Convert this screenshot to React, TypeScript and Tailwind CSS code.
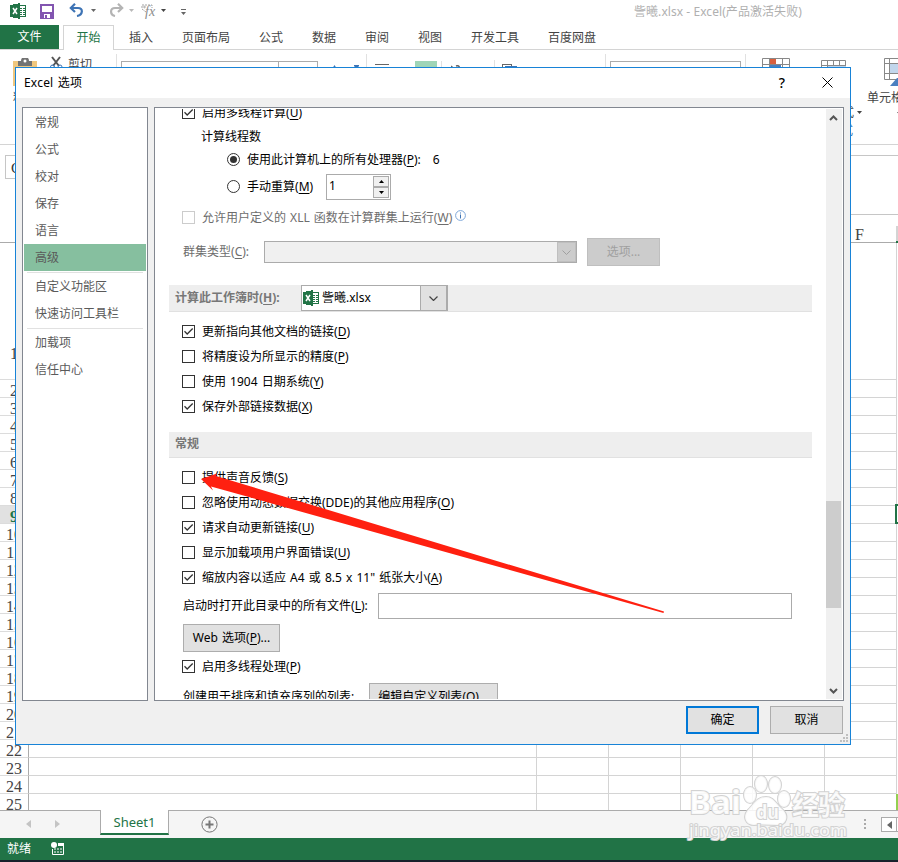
import type { ReactNode } from 'react';

const NAV_MAIN = ['常规', '公式', '校对', '保存', '语言', '高级'];
const NAV_CUSTOM = ['自定义功能区', '快速访问工具栏'];
const NAV_EXTRA = ['加载项', '信任中心'];

const ROWS = Array.from({ length: 25 }, (_, i) => i + 1);

const ExcelIcon = ({ className = '' }: { className?: string }) => (
    <svg width="16" height="16" viewBox="0 0 16 16" className={`shrink-0 ${className}`} shapeRendering="crispEdges">
        <rect x="8.5" y="2.5" width="7" height="11" fill="#fff" stroke="#217346" />
        <path d="M10 5h2M13 5h2M10 7h2M13 7h2M10 9h2M13 9h2M10 11h2M13 11h2" stroke="#217346" />
        <path d="M0 2 10 0v16L0 14z" fill="#217346" />
        <path d="m3 5 4 6M7 5l-4 6" stroke="#fff" strokeWidth="1.5" shapeRendering="auto" />
    </svg>
);

const Caret = ({ className = '' }: { className?: string }) => (
    <svg width="5" height="3" viewBox="0 0 5 3" className={`shrink-0 ${className}`}>
        <path d="M0 0h5L2.5 3z" fill="currentColor" />
    </svg>
);

const Key = ({ children }: { children: string }) => (
    <>(<span className="underline decoration-1 underline-offset-2">{children}</span>)</>
);

const Box = ({ checked, disabled }: { checked?: boolean; disabled?: boolean }) => (
    <span className={`flex h-[13px] w-[13px] shrink-0 border bg-white ${disabled ? 'border-[#cccccc]' : 'border-[#333333]'}`}>
        {checked && (
            <svg width="11" height="11" viewBox="0 0 11 11">
                <path d="M1.5 5.3 4.2 8 9.7 2.5" fill="none" stroke="#333" strokeWidth="1.3" />
            </svg>
        )}
    </span>
);

const Check = ({ checked, disabled, children }: { checked?: boolean; disabled?: boolean; children: ReactNode }) => (
    <label className={`ml-[27px] flex h-[25px] items-center gap-[7px] ${disabled ? 'text-[#6d6d6d]' : 'text-black'}`}>
        <Box checked={checked} disabled={disabled} />
        <span>{children}</span>
    </label>
);

const Radio = ({ checked }: { checked?: boolean }) => (
    <span className="mb-px flex h-[13px] w-[13px] shrink-0 items-center justify-center rounded-full border border-[#333333] bg-white">
        {checked && <span className="h-[7px] w-[7px] rounded-full bg-[#333333]" />}
    </span>
);

const NavItem = ({ label }: { label: string }) => (
    <li className={`flex h-[27px] items-center pl-[11px] text-[#5a5a5a] ${label === '高级' ? 'bg-[#86bf9f]' : ''}`}>{label}</li>
);

const NavRule = () => <li className="mx-[3px] mt-px h-px bg-[#e1e1e1]" />;

const QuickAccess = () => (
    <div className="flex h-[25px] items-start [&>*]:shrink-0">
        <ExcelIcon className="ml-[10px] mt-[3px]" />
        <svg width="14" height="15" viewBox="0 0 14 15" className="ml-[14px] mt-[4px]" fill="none">
            <path d="M1 1h12v13H1z" stroke="#8255b0" strokeWidth="2" />
            <path d="M1 8h12v6H1z" fill="#8255b0" />
            <path d="M4 10h6v4H4z" fill="#fff" />
            <path d="M5 11h2v3H5z" fill="#8255b0" />
        </svg>
        <svg width="15" height="14" viewBox="0 0 15 14" className="ml-[15px] mt-[3px]" fill="none" stroke="#3e74b5" strokeWidth="2.2">
            <path d="M2 5h7c5.500 0 5 7-1 8" />
            <path d="M6 .8 1.800 5 6 9" />
        </svg>
        <Caret className="ml-[7px] mt-[9px] text-[#666]" />
        <svg width="15" height="14" viewBox="0 0 15 14" className="ml-[13px] mt-[3px]" fill="none" stroke="#b4b4b4" strokeWidth="2.2">
            <path d="M13 5H6C.5 5 1 12 6 13" />
            <path d="M9 .8 13.200 5 9 9" />
        </svg>
        <Caret className="ml-[5px] mt-[9px] text-[#b9b9b9]" />
        <svg width="17" height="17" viewBox="0 0 17 17" className="ml-[7px] mt-[3px]" fill="none" stroke="#a3a3a3">
            <path d="M5 9 1 6V2h10v3" strokeDasharray="2 1" />
            <circle cx="3.500" cy="4" r=".8" />
            <text x="4" y="13" fontSize="14" fontStyle="italic" fill="#8c8c8c" stroke="none" fontFamily="Liberation Serif, serif">fx</text>
        </svg>
        <Caret className="ml-[3px] mt-[9px] text-[#444]" />
        <svg width="7" height="7" viewBox="0 0 7 7" className="ml-[14px] mt-[9px]" fill="#666">
            <path d="M1 0h5v1H1zM1 3h5L3.500 6z" />
        </svg>
        <span className="ml-[447px] mt-[3px] whitespace-nowrap text-[12px] leading-[18px] tracking-[0.06px] text-[#b0b0b0]">訾曦.xlsx - Excel(产品激活失败)</span>
    </div>
);

const Tabs = () => (
    <nav className="flex h-[25px] border-b border-[#d4d4d4] text-[12px] leading-[25px] text-[#444]">
        <span className="w-[59px] bg-[#217346] text-center leading-[24px] text-white">文件</span>
        <span className="ml-[4px] h-[25px] w-[51px] border-x border-t border-[#d4d4d4] bg-white text-center leading-[23px] text-[#217346]">开始</span>
        <span className="ml-[15px]">插入</span>
        <span className="ml-[29px]">页面布局</span>
        <span className="ml-[29px]">公式</span>
        <span className="ml-[29px]">数据</span>
        <span className="ml-[29px]">审阅</span>
        <span className="ml-[29px]">视图</span>
        <span className="ml-[29px]">开发工具</span>
        <span className="ml-[29px]">百度网盘</span>
    </nav>
);

const Ribbon = () => (
    <div className="flex h-[95px] items-start overflow-hidden border-b border-[#d4d4d4] text-[12px] text-[#444] [&>*]:shrink-0">
        <div className="ml-[13px] mt-[8px] w-[24px]">
            <svg width="24" height="28" viewBox="0 0 24 28">
                <path d="M0 3h24v25H0z" fill="#efc77f" />
                <path d="M5 3h3a4 4 0 0 1 8 0h3v5H5z" fill="#737373" />
                <circle cx="12" cy="3" r="1.500" fill="#fff" />
            </svg>
            <span className="mt-[3px] block whitespace-nowrap leading-[18px]">粘贴</span>
        </div>
        <svg width="13" height="14" viewBox="0 0 13 14" className="ml-[13px] mt-[6px]" fill="none">
            <path d="m2 1 7 9M10 1 3 10" stroke="#555" strokeWidth="2" />
            <circle cx="2.500" cy="11" r="2" stroke="#3e74b5" />
            <circle cx="10" cy="11" r="2" stroke="#3e74b5" />
        </svg>
        <span className="ml-[5px] mt-[6px] leading-[18px]">剪切</span>
        <span className="ml-[24px] mt-[4px] h-[80px] w-px bg-[#e1e1e1]" />
        <span className="ml-[4px] mt-[11px] h-[22px] w-[158px] border border-[#ababab]" />
        <span className="-ml-px mt-[11px] h-[22px] w-[40px] border border-[#ababab]" />
        <svg width="5" height="4" viewBox="0 0 5 4" className="ml-[14px] mt-[15px]"><path d="M0 4h5L2.500 0z" fill="#3e74b5" /></svg>
        <svg width="5" height="4" viewBox="0 0 5 4" className="ml-[17px] mt-[15px]"><path d="M0 0h5v1L2.500 4 0 1z" fill="#3e74b5" /></svg>
        <span className="ml-[7px] mt-[4px] h-[80px] w-px bg-[#e1e1e1]" />
        <span className="ml-[8px] mt-[14px] h-px w-[14px] bg-[#666]" />
        <span className="ml-[26px] mt-[11px] h-[20px] w-[22px] bg-[#9fd5b7]" />
        <span className="ml-[4px] mt-[11px] h-[70px] w-px bg-[#e1e1e1]" />
        <svg width="10" height="8" viewBox="0 0 10 8" className="ml-[9px] mt-[15px]" fill="none" stroke="#666"><path d="m0 1 4 4M5 1c3-1 4 1 4 5" strokeWidth="1.500" /></svg>
        <span className="ml-[33px] mt-[10px] h-[70px] w-px bg-[#e1e1e1]" />
        <span className="ml-[7px] mt-[14px] h-[12px] w-[10px] border border-[#666]" />
        <span className="-ml-[7px] mt-[16px] h-[12px] w-[12px] bg-[#3e74b5]" />
        <span className="ml-[88px] mt-[4px] h-[80px] w-px bg-[#e1e1e1]" />
        <span className="ml-[4px] mt-[11px] h-[40px] w-[131px] border border-[#ababab]" />
        <span className="ml-[4px] mt-[4px] h-[80px] w-px bg-[#e1e1e1]" />
        <svg width="28" height="22" viewBox="0 0 28 22" className="ml-[16px] mt-[8px]" fill="none">
            <path d="M.5.500h27v21H.5zM.5 6.500h27M7.500.500v21M13.500.500v21M20.500.500v21" stroke="#888" />
            <path d="M8 1h6v5H8z" fill="#d9603f" />
            <path d="M8 7h11v5H8z" fill="#4a7fc0" />
        </svg>
        <div className="ml-[31px] mt-[10px] flex w-[46px] flex-col">
            <svg width="26" height="20" viewBox="0 0 26 20" fill="none" stroke="#888">
                <path d="M.5.500h24v19H.5zM.5 5.500h24M6.500.500v19M12.500.500v19M18.500.500v19" />
                <path d="M7 6h18v10H7z" fill="#bdd3ea" stroke="none" />
            </svg>
            <span className="mt-[24px] flex items-center gap-[3px] leading-[18px]"><span className="ml-[9px] w-[24px]">格式</span><Caret className="-mt-[2px]" /></span>
            <span className="ml-[20px] leading-[18px] text-[#3e74b5]">式</span>
        </div>
        <div className="mt-[8px] w-[31px] overflow-hidden">
            <svg width="32" height="29" viewBox="0 0 32 29" className="ml-[17px]" fill="none">
                <path d="M.5.500h30v21H.5zM.5 5.500h30M5.500.500v21M.5 15.500h30M15.500.500v21" stroke="#888" />
                <path d="M6 6h9v9H6z" fill="#c2d6ec" />
                <path d="m6 28 7-8h12v8z" fill="#4a7fc0" />
            </svg>
            <span className="mt-px block whitespace-nowrap leading-[20px]">单元格</span>
            <Caret className="ml-[30px] mt-[4px]" />
        </div>
    </div>
);

const Sheet = () => (
    <div className="flex h-[584px] flex-col overflow-hidden font-['Liberation_Serif','Noto_Sans_CJK_SC',serif] text-[16px] text-[#444]">
        <div className="flex h-[17px] shrink-0 border-b border-[#ababab] leading-[18px]">
            <span className="w-[29px] shrink-0" />
            <span className="w-[795px] shrink-0" />
            <span className="w-[71px] shrink-0 text-center">F</span>
            <span className="ml-px h-[17px] w-[2px] shrink-0 border-b-2 border-[#217346] bg-[#d4d4d4]" />
        </div>
        {ROWS.map((n) => (
            <div key={n} className={`flex shrink-0 ${n === 1 ? 'h-[137px]' : 'h-[18px]'}`}>
                <span
                    className={`flex w-[29px] shrink-0 items-center justify-center border-r border-b border-r-[#ababab] border-b-[#dcdcdc] ${
                        n === 9 ? 'bg-[#e1e1e1] font-bold text-[#217346]' : ''
                    } ${n === 1 ? 'pt-[86px]' : 'pt-[4px]'}`}
                >
                    {n}
                </span>
                <span className="w-[508px] shrink-0 border-r border-b border-[#d4d4d4]" />
                {[0, 1, 2, 3, 4].map((c) => (
                    <span key={c} className="w-[72px] shrink-0 border-r border-b border-[#d4d4d4]" />
                ))}
                {n === 9 && <span className="-mt-[2px] -ml-[2px] h-[20px] w-[4px] shrink-0 border-y-2 border-l-2 border-[#217346] bg-white" />}
                {n === 25 && <span className="-ml-px w-[3px] shrink-0 bg-[#92d050]" />}
            </div>
        ))}
    </div>
);

const SheetBar = () => (
    <div className="flex h-[28px] items-start border-t border-[#ababab] bg-[#f5f5f5] [&>*]:shrink-0">
        <svg width="5" height="8" viewBox="0 0 5 8" className="ml-[26px] mt-[9px]" fill="#c4c4c4"><path d="M5 0v8L0 4z" /></svg>
        <svg width="5" height="8" viewBox="0 0 5 8" className="ml-[24px] mt-[9px]" fill="#c4c4c4"><path d="M0 0v8l5-4z" /></svg>
        <span className="-mt-px ml-[40px] h-[25px] w-[69px] border-x border-b-2 border-x-[#ababab] border-b-[#217346] bg-white text-center text-[13px] leading-[24px] text-[#217346]">Sheet1</span>
        <svg width="17" height="17" viewBox="0 0 17 17" className="ml-[32px] mt-[5px]" fill="none" stroke="#777">
            <circle cx="8.500" cy="8.500" r="7.600" />
            <path d="M8.500 4.500v8M4.500 8.500h8" strokeWidth="2" />
        </svg>
        <svg width="2" height="10" viewBox="0 0 2 10" className="ml-[646px] mt-[8px]" fill="#aaa"><path d="M0 0h2v2H0zM0 4h2v2H0zM0 8h2v2H0z" /></svg>
        <span className="ml-[15px] mt-[6px] flex h-[15px] w-[16px] items-center justify-center border border-[#ababab] bg-white">
            <svg width="5" height="8" viewBox="0 0 5 8" fill="#666"><path d="M5 0v8L0 4z" /></svg>
        </span>
        <span className="mt-[6px] h-[15px] w-[4px] border-y border-[#ababab] bg-white" />
    </div>
);

const StatusBar = () => (
    <div className="flex h-[24px] items-start border-b-2 border-[#17212b] bg-[#217346] text-white">
        <span className="ml-[7px] text-[12px] leading-[21px]">就绪</span>
        <svg width="13" height="13" viewBox="0 0 13 13" className="ml-[20px] mt-[4px]" fill="none">
            <path d="M7 1.500h5.500v11h-11V7" stroke="#fff" />
            <path d="M7 1h6v3H7z" fill="#fff" />
            <circle cx="3" cy="3" r="3" fill="#fff" />
            <path d="M3 7h2M6 7h2M9 7h2M3 10h2M6 10h2M9 10h2" stroke="#fff" />
        </svg>
    </div>
);

const AdvancedPane = () => (
    <div className="flex h-[590px] w-[671px] flex-col overflow-hidden whitespace-nowrap text-black [word-spacing:1px]">
        <div className="-mt-[9px] shrink-0"><Check checked>启用多线程计算<Key>U</Key></Check></div>
        <p className="ml-[46px] h-[24px] shrink-0 leading-[23px]">计算线程数</p>
        <div className="ml-[72px] flex h-[21px] shrink-0 items-center">
            <Radio checked />
            <span className="ml-[7px]">使用此计算机上的所有处理器<Key>P</Key>:</span>
            <span className="ml-[12px]">6</span>
        </div>
        <div className="ml-[72px] mt-[4px] flex h-[26px] shrink-0 items-center">
            <Radio />
            <span className="ml-[7px] w-[79px]">手动重算<Key>M</Key></span>
            <span className="flex h-[26px] w-[65px] justify-between border border-[#ababab] p-px pl-[2px] leading-[20px]">
                1
                <span className="flex w-[16px] flex-col">
                    <span className="flex h-[11px] items-center justify-center border border-[#ababab] bg-[#f0f0f0]"><Caret className="rotate-180" /></span>
                    <span className="flex h-[11px] items-center justify-center border border-[#ababab] bg-[#f0f0f0]"><Caret /></span>
                </span>
            </span>
        </div>
        <div className="mt-[5px] flex shrink-0">
            <Check disabled>允许用户定义的 XLL 函数在计算群集上运行<Key>W</Key></Check>
            <svg width="11" height="11" viewBox="0 0 11 11" className="ml-[3px] mt-[5px]">
                <circle cx="5.500" cy="5.500" r="4.900" fill="#fff" stroke="#7da7d9" />
                <path d="M5.500 2.500v1M5.500 4.500v4" stroke="#3e74b5" />
            </svg>
        </div>
        <div className="ml-[28px] mt-[8px] flex h-[28px] shrink-0 items-center">
            <span className="w-[81px] text-[#6d6d6d]">群集类型<Key>C</Key>:</span>
            <span className="flex h-[22px] w-[313px] justify-end border border-[#ababab] bg-[#f0f0f0]">
                <span className="flex w-[19px] items-center justify-center border border-[#bfbfbf] bg-[#cccccc]">
                    <svg width="9" height="5" viewBox="0 0 9 5" fill="none"><path d="m.5.500 4 4 4-4" stroke="#a0a0a0" /></svg>
                </span>
            </span>
            <span className="ml-[10px] h-[28px] w-[73px] border border-[#bfbfbf] bg-[#cccccc] text-center leading-[26px] text-[#a0a0a0]">选项...</span>
        </div>
        <div className="ml-[14px] mt-[19px] flex h-[27px] w-[643px] shrink-0 border-b border-[#e1e1e1] bg-[#eeeeee]">
            <span className="w-[132px] pl-[6px] font-bold leading-[26px] text-[#777]">计算此工作簿时<Key>H</Key>:</span>
            <span className="flex h-[26px] w-[147px] items-center border border-[#ababab] bg-white">
                <ExcelIcon className="ml-px" />
                <span className="ml-[3px] flex-1">訾曦.xlsx</span>
                <span className="flex h-[26px] w-[27px] items-center justify-center border border-[#ababab] bg-[#e1e1e1]">
                    <svg width="9" height="5" viewBox="0 0 9 5" fill="none"><path d="m.5.500 4 4 4-4" stroke="#444" strokeWidth="1.200" /></svg>
                </span>
            </span>
        </div>
        <div className="mt-[7px] shrink-0">
            <Check checked>更新指向其他文档的链接<Key>D</Key></Check>
            <Check>将精度设为所显示的精度<Key>P</Key></Check>
            <Check>使用 1904 日期系统<Key>Y</Key></Check>
            <Check checked>保存外部链接数据<Key>X</Key></Check>
        </div>
        <h3 className="ml-[14px] mt-[13px] h-[26px] w-[643px] shrink-0 border-b border-[#e1e1e1] bg-[#eeeeee] pl-[6px] font-bold leading-[24px] text-[#777]">常规</h3>
        <div className="mt-[7px] shrink-0">
            <Check>提供声音反馈<Key>S</Key></Check>
            <Check>忽略使用动态数据交换(DDE)的其他应用程序<Key>O</Key></Check>
            <Check checked>请求自动更新链接<Key>U</Key></Check>
            <Check>显示加载项用户界面错误<Key>U</Key></Check>
            <Check checked>缩放内容以适应 A4 或 8.5 x 11" 纸张大小<Key>A</Key></Check>
        </div>
        <div className="ml-[28px] mt-[3px] flex h-[26px] shrink-0 items-center">
            <span className="w-[195px]">启动时打开此目录中的所有文件<Key>L</Key>:</span>
            <span className="h-[26px] w-[414px] border border-[#ababab] bg-white" />
        </div>
        <span className="ml-[28px] mt-[5px] h-[28px] w-[97px] shrink-0 border border-[#adadad] bg-[#e1e1e1] text-center leading-[25px]">Web 选项<Key>P</Key>...</span>
        <div className="mt-[2px] shrink-0"><Check checked>启用多线程处理<Key>P</Key></Check></div>
        <div className="ml-[28px] mt-[4px] flex h-[28px] shrink-0 items-center">
            <span className="w-[186px]">创建用于排序和填充序列的列表:</span>
            <span className="h-[28px] w-[129px] border border-[#adadad] bg-[#e1e1e1] text-center leading-[26px]">编辑自定义列表<Key>O</Key>...</span>
        </div>
    </div>
);

const ScrollBar = () => (
    <div className="flex h-[590px] w-[16px] flex-col items-center bg-[#f0f0f0] pr-px">
        <svg width="9" height="6" viewBox="0 0 9 6" className="mt-[6px] shrink-0" fill="none"><path d="m1 5 3.500-3.500L8 5" stroke="#555" strokeWidth="2" /></svg>
        <span className="mt-[380px] h-[107px] w-[15px] shrink-0 bg-[#cdcdcd]" />
        <svg width="9" height="6" viewBox="0 0 9 6" className="mt-[80px] shrink-0" fill="none"><path d="m1 1 3.500 3.500L8 1" stroke="#555" strokeWidth="2" /></svg>
    </div>
);

const OptionsDialog = () => (
    <section className="absolute left-[15px] top-[67px] flex h-[678px] w-[836px] flex-col border border-[#1883d7] bg-[#f0f0f0] text-[12px] leading-[18px]">
        <header className="flex h-[30px] items-center bg-white text-black">
            <span className="ml-[8px] tracking-[0.2px] [word-spacing:1px]">Excel 选项</span>
            <span className="ml-auto text-[14px] font-medium">?</span>
            <svg width="11" height="11" viewBox="0 0 11 11" className="mb-[2px] ml-[37px] mr-[17px]" stroke="#000"><path d="m.5.500 10 10M10.500.500l-10 10" /></svg>
        </header>
        <div className="mt-[9px] flex h-[594px] px-[6px]">
            <ul className="w-[126px] shrink-0 border border-[#828790] bg-white p-px">
                {NAV_MAIN.map((label) => <NavItem key={label} label={label} />)}
                <NavRule />
                {NAV_CUSTOM.map((label) => <NavItem key={label} label={label} />)}
                <NavRule />
                {NAV_EXTRA.map((label) => <NavItem key={label} label={label} />)}
            </ul>
            <div className="ml-[6px] flex w-[690px] shrink-0 border border-[#828790] bg-white py-px">
                <AdvancedPane />
                <ScrollBar />
            </div>
        </div>
        <footer className="flex flex-1 items-start justify-end pr-[2px] pt-[5px]">
            <button className="h-[28px] w-[73px] border-2 border-[#0078d7] bg-[#e1e1e1] leading-[22px] text-black">确定</button>
            <button className="ml-[11px] h-[28px] w-[73px] border border-[#adadad] bg-[#e1e1e1] leading-[24px] text-black">取消</button>
            <svg width="8" height="8" viewBox="0 0 8 8" className="-ml-[3px] mt-[28px] w-[8px] shrink-0" fill="#bfbfbf">
                <path d="M6 0h2v2H6zM3 3h2v2H3zM6 3h2v2H6zM0 6h2v2H0zM3 6h2v2H3zM6 6h2v2H6z" />
            </svg>
        </footer>
    </section>
);

const Watermark = () => (
    <svg
        width="170"
        height="85"
        viewBox="0 0 170 85"
        className="pointer-events-none absolute left-[684px] top-[760px] font-['Noto_Sans','Noto_Sans_CJK_SC',sans-serif]"
        fill="#fff"
        fillOpacity=".85"
        stroke="#d2d2d2"
        strokeWidth="2"
        paintOrder="stroke"
    >
        <text x="5" y="54" fontSize="33" fontWeight="700" textLength="52" lengthAdjust="spacingAndGlyphs">Bai</text>
        <ellipse cx="66" cy="35" rx="6" ry="8" />
        <ellipse cx="77" cy="24" rx="6" ry="8" />
        <ellipse cx="91" cy="25" rx="6" ry="8" />
        <ellipse cx="100" cy="39" rx="6" ry="8" />
        <path d="M82 37c8 0 10 7 16 12 8 7 4 16-4 16-8 0-16-1-24 0-8 0-12-8-6-15 6-6 9-13 18-13z" />
        <text x="72" y="59" fontSize="19" fontWeight="700" textLength="23" lengthAdjust="spacingAndGlyphs">du</text>
        <text x="108" y="55" fontSize="27" fontWeight="700" textLength="53">经验</text>
        <text x="5" y="76" fontSize="16" textLength="158" lengthAdjust="spacingAndGlyphs">jingyan.baidu.com</text>
    </svg>
);

export default function App() {
    return (
        <div className="relative h-[862px] w-[898px] overflow-hidden bg-white font-['Noto_Sans','Noto_Sans_CJK_SC',sans-serif]">
            <QuickAccess />
            <Tabs />
            <Ribbon />
            <div className="flex h-[81px] items-start pt-[10px]">
                <span className="ml-[5px] h-[24px] w-[100px] border border-[#c6c6c6] pl-[5px] font-['Liberation_Serif',serif] text-[15px] leading-[24px] text-[#333]">G9</span>
                <span className="ml-[80px] h-[60px] flex-1 border-y border-[#c6c6c6]" />
            </div>
            <Sheet />
            <SheetBar />
            <StatusBar />
            <OptionsDialog />
            {/* red pointer towards the sound feedback option */}
            <svg width="898" height="862" viewBox="0 0 898 862" className="pointer-events-none absolute left-0 top-0">
                <path d="M201 479 217 473.500 216 476 664 611.500 663.500 613 211 486.500 213 490.500z" fill="#ff2010" />
            </svg>
            <Watermark />
        </div>
    );
}
